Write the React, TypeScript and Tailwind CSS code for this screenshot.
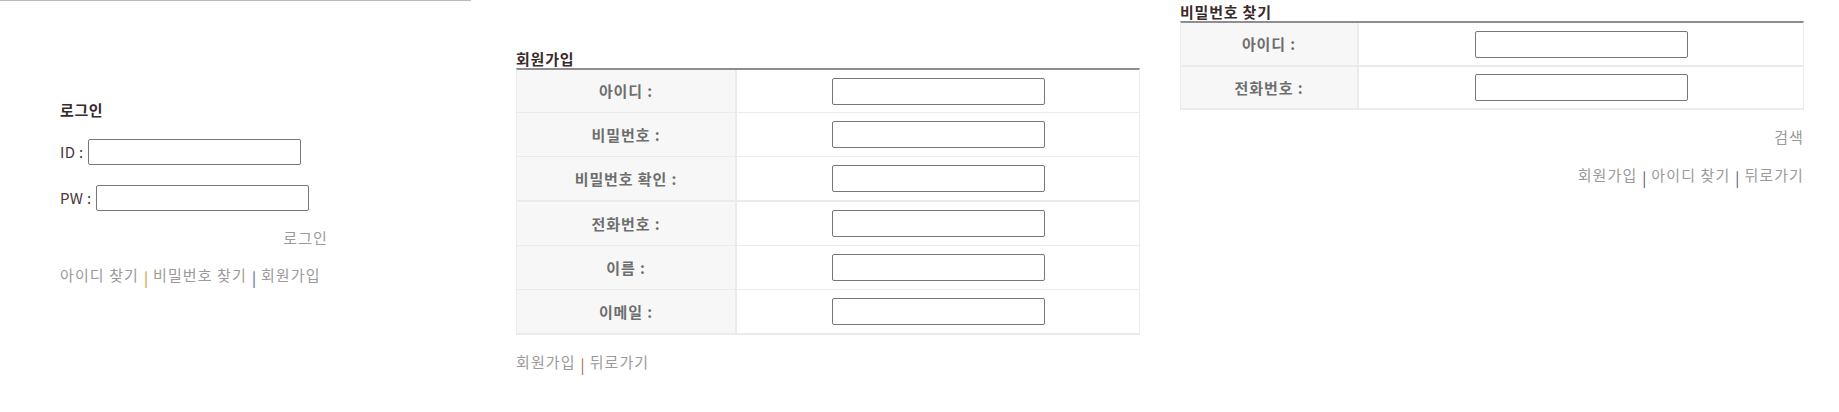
import React from "react";

const font = "font-['Noto_Sans_CJK_KR','Noto_Sans',sans-serif]";

const Sep = ({ color }: { color: string }) => (
  <span className={`mx-[5px] inline-block translate-y-[3px] tracking-normal ${color}`}>|</span>
);

const FormRow = ({ label, last, h = "h-[44px]" }: { label: string; last?: boolean; h?: string }) => (
  <div className={`flex ${h} ${last ? "" : "border-b border-[#ebebeb]"}`}>
    <div className="flex items-center justify-center bg-[#f7f7f7] border-r-2 border-[#ebebeb] font-bold text-[#6e6e6e] tracking-[0.9px]" style={{ width: "var(--lw)" }}>
      {label}
    </div>
    <div className="flex flex-1 items-center justify-center bg-white">
      <input type="text" className="h-[27px] w-[213px] rounded-[2px] border border-[#767676] bg-white" />
    </div>
  </div>
);

export default function App() {
  return (
    <div className={`flex items-start w-full h-[412px] bg-white text-[15px] tracking-[1.1px] leading-[20px] ${font}`}>
      {/* 로그인 */}
      <div className="w-[471px] border-t border-[#bbbbbb] pl-[60px] pt-[99px]">
        <h3 className="font-bold text-[#3a2a2a] tracking-[0.6px]">로그인</h3>
        <div className="mt-[19px] flex items-center gap-[5px] text-[#4a3538] tracking-[0.3px]">
          <span>ID :</span>
          <input type="text" className="h-[26px] w-[213px] rounded-[2px] border border-[#767676]" />
        </div>
        <div className="mt-[20px] flex items-center gap-[5px] text-[#4a3538] tracking-[0.3px]">
          <span>PW :</span>
          <input type="password" className="h-[26px] w-[213px] rounded-[2px] border border-[#767676]" />
        </div>
        <div className="mt-[17px] w-[268px] text-right text-[#9a9a9a]">로그인</div>
        <div className="mt-[17px] text-[#9a9a9a]">
          아이디 찾기<Sep color="text-[#c8923a]" />비밀번호 찾기<Sep color="text-[#55558f]" />회원가입
        </div>
      </div>

      {/* 회원가입 */}
      <div className="ml-[45px] w-[624px] pt-[49px]">
        <h3 className="leading-[19px] font-bold text-[#3a2a2a] tracking-[0.8px]">회원가입</h3>
        <div className="border-t-2 border-[#8f8c94] border-x border-b-2 border-x-[#ebebeb] border-b-[#ebebeb] [--lw:220px]">
          <FormRow label="아이디 :" h="h-[43px]" />
          <FormRow label="비밀번호 :" />
          <div className="border-b border-[#ebebeb]">
            <FormRow label="비밀번호 확인 :" />
          </div>
          <FormRow label="전화번호 :" />
          <FormRow label="이름 :" />
          <FormRow label="이메일 :" last h="h-[43px]" />
        </div>
        <div className="mt-[17px] text-[#9a9a9a]">
          회원가입<Sep color="text-[#b8583e]" />뒤로가기
        </div>
      </div>

      {/* 비밀번호 찾기 */}
      <div className="ml-[40px] w-[624px] pt-[2px]">
        <h3 className="leading-[19px] font-bold text-[#3a2a2a] tracking-[0.8px]">비밀번호 찾기</h3>
        <div className="border-t-2 border-[#8f8c94] border-x border-b-2 border-x-[#ebebeb] border-b-[#ebebeb] [--lw:178px]">
          <div className="border-b border-[#ebebeb]">
            <FormRow label="아이디 :" h="h-[43px]" />
          </div>
          <FormRow label="전화번호 :" last h="h-[41px]" />
        </div>
        <div className="mt-[17px] text-right text-[#9a9a9a]">검색</div>
        <div className="mt-[18px] text-right text-[#9a9a9a]">
          회원가입<Sep color="text-[#555a70]" />아이디 찾기<Sep color="text-[#555a70]" />뒤로가기
        </div>
      </div>
    </div>
  );
}
